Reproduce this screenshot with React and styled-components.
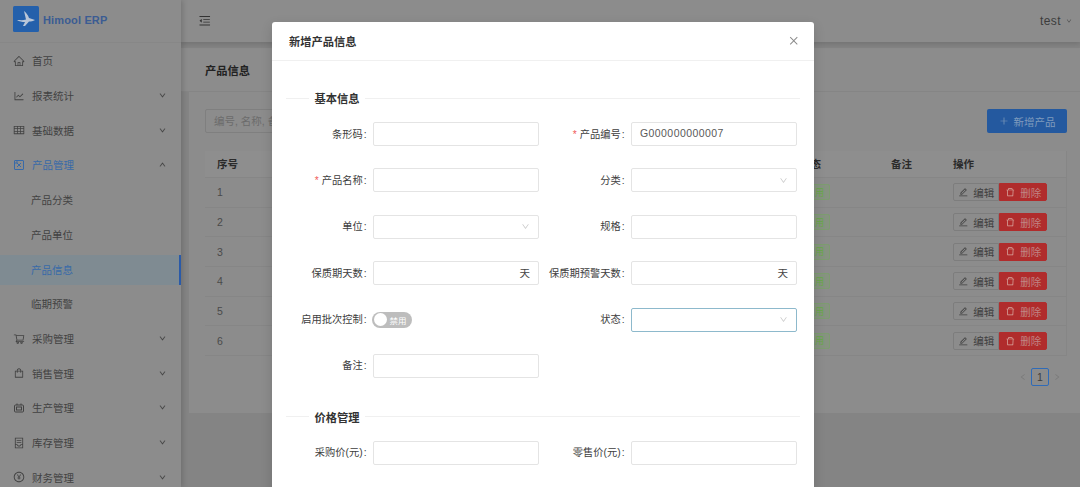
import React from "react";
import styled, { createGlobalStyle } from "styled-components";
import {
  AiOutlineHome, AiOutlineLineChart, AiOutlineTable, AiOutlineDown, AiOutlineUp,
  AiOutlineShoppingCart, AiOutlineShopping, AiOutlineContainer, AiOutlinePayCircle,
  AiOutlineMenuFold, AiOutlineEdit, AiOutlineDelete, AiOutlinePlus, AiOutlineClose, AiOutlineLeft, AiOutlineRight,
} from "react-icons/ai";

const FONT = `"Liberation Sans", "Noto Sans CJK SC", sans-serif`;

const Global = createGlobalStyle`
  html, body { margin: 0; height: 100%; overflow: hidden; background: #848484; }
  * { box-sizing: border-box; }
  body { font-family: ${FONT}; font-size: 10.5px; color: #3c3c3c; }
`;

const Shell = styled.div`display: flex; height: 487px; width: 1080px; overflow: hidden; position: relative;`;

const Sidebar = styled.aside`
  width: 181px; flex: none; background: #8c8c8c; overflow: hidden; position: relative; z-index: 2;
  box-shadow: 2px 0 5px rgba(0,0,0,.16);
`;
const Brand = styled.div`
  height: 43px; display: flex; align-items: center; gap: 4px; padding: 0 0 5px 13px;
  border-bottom: 1px solid #878787;
`;
const LogoBox = styled.svg`width: 26px; height: 26px; flex: none;`;
const BrandName = styled.span`font-size: 11px; font-weight: 700; color: #3b5c93; letter-spacing: .15px; margin-top: 2px;`;
const Menu = styled.nav`display: flex; flex-direction: column; padding-top: 3.8px;`;
const MenuItem = styled.div`
  height: 30px; margin-bottom: 4.72px; flex: none; display: flex; align-items: center; position: relative;
  padding: 0 13px 2px ${p => (p.$child ? "31px" : "13px")}; gap: 7px; font-size: 10.5px;
  color: ${p => (p.$active ? "#386aa8" : "#424242")};
  background: ${p => (p.$selected ? "#7f8b92" : "transparent")};
  ${p => p.$selected && "border-right: 2px solid #2a5aa8;"}
  svg.lead { width: 12px; height: 12px; flex: none; }
  svg.arrow { font-size: 7px; margin-left: auto; margin-right: 2px; color: #3f3f3f; stroke: currentColor; stroke-width: 40; }
`;

const Main = styled.main`flex: 1; min-width: 0; display: flex; flex-direction: column;`;
const TopBar = styled.header`
  height: 42px; flex: none; background: #8c8c8c; display: flex; align-items: center; justify-content: space-between;
  padding: 0 8px 0 17px; box-shadow: 0 2px 5px rgba(0,0,0,.14); position: relative;
  svg { font-size: 13.5px; color: #333; }
`;
const User = styled.div`
  display: flex; align-items: center; gap: 5px; font-size: 12px; color: #3c3c3c; letter-spacing: .4px;
  svg { font-size: 6px; color: #444; }
`;
const TitleBar = styled.div`
  margin-top: 6px; height: 44px; flex: none; background: #8c8c8c; border-bottom: 1px solid #858585;
  display: flex; align-items: center; padding: 0 0 0 24px; font-size: 11.25px; font-weight: 700; color: #222;
`;
const Content = styled.section`height: 321px; flex: none; margin-left: 8px; background: #8c8c8c; padding: 17px 13px 0 16px;`;
const Tools = styled.div`display: flex; justify-content: space-between; height: 24px; margin-bottom: 18px;`;
const SearchBox = styled.div`
  width: 170px; height: 24px; border: 1px solid #7f7f7f; border-radius: 2px; display: flex; align-items: center;
  padding: 0 8px 1px; color: #6b6b6b; font-size: 10.5px;
`;
const AddButton = styled.button`
  width: 80px; height: 24px; border: 0; border-radius: 2px; background: #24599f; color: #7f9bbd; font: inherit; font-size: 10.5px;
  display: flex; align-items: center; justify-content: center; gap: 5px; padding: 0;
  svg { font-size: 10px; }
`;
const Table = styled.div`border-right: 1px solid #868686; width: 862px;`;
const Row = styled.div`
  display: grid; grid-template-columns: 75px 120px 120px 120px 148px 91px 62px 126px; align-items: center;
  height: ${p => (p.$head ? "27px" : "29.7px")}; border-bottom: 1px solid #868686;
  padding-bottom: ${p => (p.$head ? "2px" : "0")};
  background: ${p => (p.$head ? "#8e8e8e" : "transparent")};
  font-weight: ${p => (p.$head ? 700 : 400)}; color: ${p => (p.$head ? "#2b2b2b" : "#4a4a4a")};
`;
const Cell = styled.div`padding-left: 12px; white-space: nowrap; overflow: hidden;`;
const Tag = styled.span`
  display: inline-flex; width: 30px; height: 16px; align-items: center; justify-content: center; border-radius: 2px;
  border: 1px solid #7d9c70; background: #869380; color: #66a848; font-size: 9px;
`;
const Actions = styled.div`display: flex; padding-left: 12px;`;
const ActionButton = styled.button`
  width: ${p => (p.$danger ? "48px" : "46px")}; height: 18px; padding: 0; font: inherit; font-size: 10.5px;
  display: flex; align-items: center; justify-content: center; gap: 5px;
  border: 1px solid ${p => (p.$danger ? "#b02c2c" : "#7d7d7d")}; border-radius: ${p => (p.$danger ? "0 2px 2px 0" : "2px 0 0 2px")};
  background: ${p => (p.$danger ? "#b02c2c" : "#8c8c8c")}; color: ${p => (p.$danger ? "#c08585" : "#3f3f3f")};
  svg { font-size: 10.5px; color: ${p => (p.$danger ? "#d8a8a0" : "#3f3f3f")}; }
`;
const Pager = styled.div`display: flex; justify-content: flex-end; align-items: center; gap: 4px; margin-top: 12px; padding-right: 6px; svg { font-size: 8px; color: #777; }`;
const PageNo = styled.span`
  width: 18px; height: 18px; border: 1px solid #2f6bb8; border-radius: 2px; display: flex; align-items: center; justify-content: center;
  color: #3c3c3c; font-size: 10.5px;
`;

const Mask = styled.div`position: absolute; inset: 0; z-index: 5; display: flex; justify-content: center; padding: 22px 0 0 6px;`;
const Modal = styled.div`
  width: 542px; height: 600px; flex: none; background: #fff; border-radius: 3px;
  box-shadow: 0 4px 12px rgba(0,0,0,.15);
`;
const ModalHead = styled.div`
  height: 39px; display: flex; align-items: center; justify-content: space-between; padding: 0 15px 0 17px;
  border-bottom: 1px solid #f0f0f0; font-size: 11.25px; font-weight: 700; color: #333;
  svg { font-size: 11.5px; color: #8a8a8a; }
`;
const ModalBody = styled.div`padding: 27px 17px 0 9px;`;
const Divider = styled.div`
  display: flex; align-items: center; height: 20px; margin: ${p => (p.$later ? "29px" : "0")} -3px 14px 5px;
  font-size: 11.25px; font-weight: 700; color: #333; gap: 5.5px;
  &::before { content: ""; width: 23px; border-top: 1px solid #f0f0f0; }
  &::after { content: ""; flex: 1; border-top: 1px solid #f0f0f0; }
`;
const FormGrid = styled.div`display: grid; grid-template-columns: 258px 258px; row-gap: 22.4px;`;
const Field = styled.div`display: grid; grid-template-columns: 92px 166px; align-items: center;`;
const Label = styled.label`
  text-align: right; padding: 0 6.5px 2px 0; color: #3d3d3d; font-size: 10.25px; white-space: nowrap;
  ${p => p.$required && `&::before { content: "*"; color: #f05a5a; margin-right: 3px; }`}
`;
const Colon = styled.span`margin-left: 1px;`;
const Control = styled.div`
  height: 24px; border-radius: 2px; border: 1px solid ${p => (p.$focus ? "#8db9cc" : "#e4e4e4")}; background: #fff;
  display: flex; align-items: center; justify-content: space-between; padding: 0 8px 2px;
  color: #595959; font-size: 10.5px;
  svg { font-size: 9px; color: #c8c8c8; margin: 2px 0 0 auto; }
`;
const Value = styled.span`letter-spacing: .42px;`;
const Suffix = styled.span`margin-left: auto; color: #444;`;
const Switch = styled.div`
  width: 40px; height: 16px; border-radius: 8px; background: #bdbdbd; display: flex; align-items: center; gap: 3px; padding: 0 1.5px;
  color: #fff; font-size: 8.5px; margin-left: -1px;
`;
const Knob = styled.span`width: 13px; height: 13px; border-radius: 50%; background: #fff; flex: none;`;

const ProductIcon = props => (
  <svg viewBox="0 0 24 24" fill="none" stroke="currentColor" strokeWidth="2" {...props}>
    <rect x="3" y="3" width="18" height="18" rx="1" />
    <path d="M8 8l8 8M16 8l-8 8M8 3v5M3 8h5" />
  </svg>
);
const ProductionIcon = props => (
  <svg viewBox="0 0 24 24" fill="none" stroke="currentColor" strokeWidth="2" {...props}>
    <rect x="3" y="6" width="18" height="14" rx="2" />
    <rect x="7" y="10" width="10" height="6" />
    <path d="M8 6V3M16 6V3" />
  </svg>
);

const topMenus = [
  [AiOutlineHome, "首页"],
  [AiOutlineLineChart, "报表统计", true],
  [AiOutlineTable, "基础数据", true],
];
const lowerMenus = [
  [AiOutlineShoppingCart, "采购管理"],
  [AiOutlineShopping, "销售管理"],
  [ProductionIcon, "生产管理"],
  [AiOutlineContainer, "库存管理"],
  [AiOutlinePayCircle, "财务管理"],
];
const Chevron = () => <AiOutlineDown className="arrow" />;

const F = ({ label, required, children }) => (
  <Field>
    <Label $required={required}>{label}<Colon>:</Colon></Label>
    {children}
  </Field>
);

export default function App() {
  return (
    <>
      <Global />
      <Shell>
        <Sidebar>
          <Brand>
            <LogoBox viewBox="0 0 26 26">
              <rect width="26" height="26" rx="1.5" fill="#2460ab" />
              <path d="M4 14c3 0 6 .5 9-.5L11 5c2 1.5 4 4 5 7l6 2c-2 1.500-4 1.500-6 1.500l-4 4.500h-2l2-4c-3 0-6-.5-8-2z" fill="#b9c6d8" />
            </LogoBox>
            <BrandName>Himool ERP</BrandName>
          </Brand>
          <Menu>
            {topMenus.map(([Icon, t, arrow]) => (
              <MenuItem key={t}><Icon className="lead" />{t}{arrow && <Chevron />}</MenuItem>
            ))}
            <MenuItem $active><ProductIcon className="lead" />产品管理<AiOutlineUp className="arrow" /></MenuItem>
            <MenuItem $child>产品分类</MenuItem>
            <MenuItem $child>产品单位</MenuItem>
            <MenuItem $child $active $selected>产品信息</MenuItem>
            <MenuItem $child>临期预警</MenuItem>
            {lowerMenus.map(([Icon, t]) => (
              <MenuItem key={t}><Icon className="lead" />{t}<Chevron /></MenuItem>
            ))}
          </Menu>
        </Sidebar>
        <Main>
          <TopBar>
            <AiOutlineMenuFold />
            <User>test <AiOutlineDown /></User>
          </TopBar>
          <TitleBar>产品信息</TitleBar>
          <Content>
            <Tools>
              <SearchBox>编号, 名称, 备注</SearchBox>
              <AddButton><AiOutlinePlus />新增产品</AddButton>
            </Tools>
            <Table>
              <Row $head>
                <Cell>序号</Cell><Cell /><Cell /><Cell /><Cell />
                <Cell>状态</Cell><Cell>备注</Cell><Cell>操作</Cell>
              </Row>
              {[1, 2, 3, 4, 5, 6].map(n => (
                <Row key={n}>
                  <Cell>{n}</Cell><Cell /><Cell /><Cell /><Cell />
                  <Cell><Tag>启用</Tag></Cell><Cell />
                  <Actions>
                    <ActionButton><AiOutlineEdit />编辑</ActionButton>
                    <ActionButton $danger><AiOutlineDelete />删除</ActionButton>
                  </Actions>
                </Row>
              ))}
            </Table>
            <Pager><AiOutlineLeft /><PageNo>1</PageNo><AiOutlineRight /></Pager>
          </Content>
        </Main>
        <Mask>
          <Modal>
            <ModalHead>新增产品信息<AiOutlineClose /></ModalHead>
            <ModalBody>
              <Divider>基本信息</Divider>
              <FormGrid>
                <F label="条形码"><Control /></F>
                <F label="产品编号" required><Control><Value>G000000000007</Value></Control></F>
                <F label="产品名称" required><Control /></F>
                <F label="分类"><Control><AiOutlineDown /></Control></F>
                <F label="单位"><Control><AiOutlineDown /></Control></F>
                <F label="规格"><Control /></F>
                <F label="保质期天数"><Control><Suffix>天</Suffix></Control></F>
                <F label="保质期预警天数"><Control><Suffix>天</Suffix></Control></F>
                <F label="启用批次控制"><Switch><Knob />禁用</Switch></F>
                <F label="状态"><Control $focus><AiOutlineDown /></Control></F>
                <F label="备注"><Control /></F>
              </FormGrid>
              <Divider $later>价格管理</Divider>
              <FormGrid>
                <F label="采购价(元)"><Control /></F>
                <F label="零售价(元)"><Control /></F>
              </FormGrid>
            </ModalBody>
          </Modal>
        </Mask>
      </Shell>
    </>
  );
}
